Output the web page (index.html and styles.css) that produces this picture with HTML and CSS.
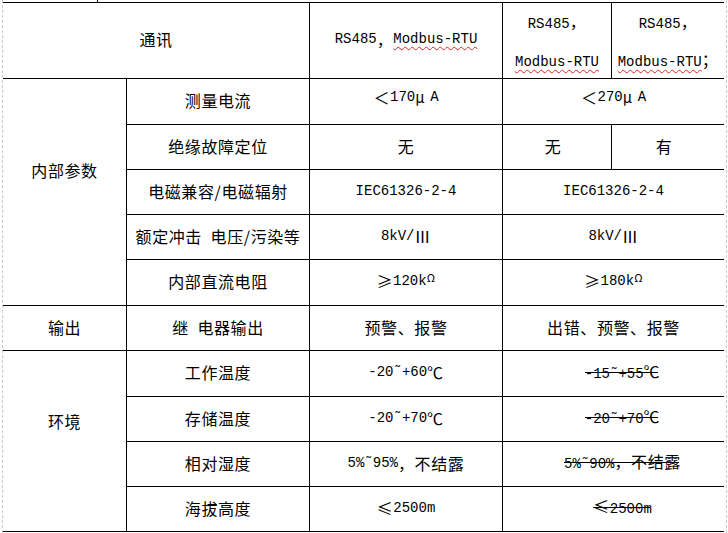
FILE: index.html
```html
<!DOCTYPE html>
<html lang="zh-CN">
<head>
<meta charset="utf-8">
<title>参数对照表</title>
<link rel="stylesheet" href="styles.css">
</head>
<body>
<div class="page">
  <div class="stub"><div class="stub-cell"></div></div>
  <div class="sheet">
    <div class="c span2">通讯</div>
    <div class="c"><span class="en">RS485</span>，<span class="en wavy">Modbus-RTU</span></div>
    <div class="c two"><span class="ln"><span class="en">RS485</span>，</span><span class="ln"><span class="en wavy">Modbus-RTU</span></span></div>
    <div class="c two"><span class="ln"><span class="en">RS485</span>，</span><span class="ln"><span class="en wavy">Modbus-RTU</span>；</span></div>

    <div class="c grp g-int">内部参数</div>
    <div class="c">测量电流</div>
    <div class="c up">＜<span class="en">170</span><span class="mu">μ</span><span class="en">A</span></div>
    <div class="c span2 up">＜<span class="en">270</span><span class="mu">μ</span><span class="en">A</span></div>

    <div class="c">绝缘故障定位</div>
    <div class="c">无</div>
    <div class="c nudge">无</div>
    <div class="c nudge">有</div>

    <div class="c">电磁兼容/电磁辐射</div>
    <div class="c"><span class="en">IEC61326-2-4</span></div>
    <div class="c span2"><span class="en">IEC61326-2-4</span></div>

    <div class="c">额定冲击&ensp;电压/污染等</div>
    <div class="c"><span class="en">8kV/</span>Ⅲ</div>
    <div class="c span2"><span class="en">8kV/</span>Ⅲ</div>

    <div class="c">内部直流电阻</div>
    <div class="c">≥<span class="en">120k</span><span class="om">Ω</span></div>
    <div class="c span2">≥<span class="en">180k</span><span class="om">Ω</span></div>

    <div class="c">输出</div>
    <div class="c">继&ensp;电器输出</div>
    <div class="c">预警、报警</div>
    <div class="c span2">出错、预警、报警</div>

    <div class="c grp g-env">环境</div>
    <div class="c">工作温度</div>
    <div class="c"><span class="en">-20˜+60</span>℃</div>
    <div class="c span2 strike"><span class="st"><span class="en">-15˜+55</span>℃</span></div>

    <div class="c">存储温度</div>
    <div class="c"><span class="en">-20˜+70</span>℃</div>
    <div class="c span2 strike"><span class="st"><span class="en">-20˜+70</span>℃</span></div>

    <div class="c">相对湿度</div>
    <div class="c"><span class="en">5%˜95%</span>，不结露</div>
    <div class="c span2 strike"><span class="st"><span class="en">5%˜90%</span>，不结露</span></div>

    <div class="c">海拔高度</div>
    <div class="c">≤<span class="en">2500m</span></div>
    <div class="c span2 strike"><span class="st">≤<span class="en">2500m</span></span></div>
  </div>
</div>
</body>
</html>
```

FILE: styles.css
```css
html, body {
  margin: 0;
  padding: 0;
  background: #fff;
}

body {
  font-family: "Noto Sans CJK SC", "Liberation Sans", sans-serif;
  font-size: 16px;
  color: #000;
}

.page {
  width: 721px;
  height: 533px;
  margin-left: 2px;
  padding-right: 2px;
  border-left: 1px dashed #c8c8c8;
  border-right: 1px dashed #c8c8c8;
}

.stub {
  height: 2px;
  display: flex;
}

.stub-cell {
  width: 94px;
  border-right: 1px solid #000;
}

.sheet {
  display: grid;
  grid-template-columns: 123px 182px 192px 108px 112px;
  grid-template-rows: 75px 45px 44px 44px 44px 45px 44px 45px 44px 44px 44px;
  gap: 1px;
  background: #000;
  padding: 1px 0;
}

.c {
  background: #fff;
  display: flex;
  align-items: center;
  justify-content: center;
  text-align: center;
  line-height: 20px;
  letter-spacing: 0.6px;
  white-space: nowrap;
  padding-bottom: 3px;
  box-sizing: border-box;
}

.span2 {
  grid-column: span 2;
}

.grp {
  grid-row: span 5;
}

.g-int {
  padding-bottom: 44px;
}

.g-env {
  grid-row: span 4;
  padding-bottom: 40px;
}

.up {
  padding-bottom: 9px;
}

.nudge {
  padding-right: 8px;
}

.two {
  flex-direction: column;
  justify-content: flex-start;
  align-items: center;
  padding-bottom: 0;
}

.two .ln {
  display: block;
  line-height: 41px;
}

.two .ln:first-child {
  margin-top: -2px;
}

.two .ln:last-child {
  margin-top: -6px;
}

.en {
  font-family: "Liberation Mono", "DejaVu Sans Mono", monospace;
  font-size: 14px;
  letter-spacing: 0;
}

.wavy {
  text-decoration: underline wavy #e02424;
  text-decoration-thickness: 1px;
  text-underline-offset: 3px;
}

.mu {
  display: inline-block;
  width: 15px;
  text-align: left;
  font-size: 15px;
}

.om {
  font-size: 11px;
  position: relative;
  top: -4px;
}

.strike {
  padding-left: 18px;
}

.st {
  position: relative;
}

.st::after {
  content: "";
  position: absolute;
  left: 0;
  right: 2px;
  top: 11px;
  border-top: 1px solid #000;
}
```
